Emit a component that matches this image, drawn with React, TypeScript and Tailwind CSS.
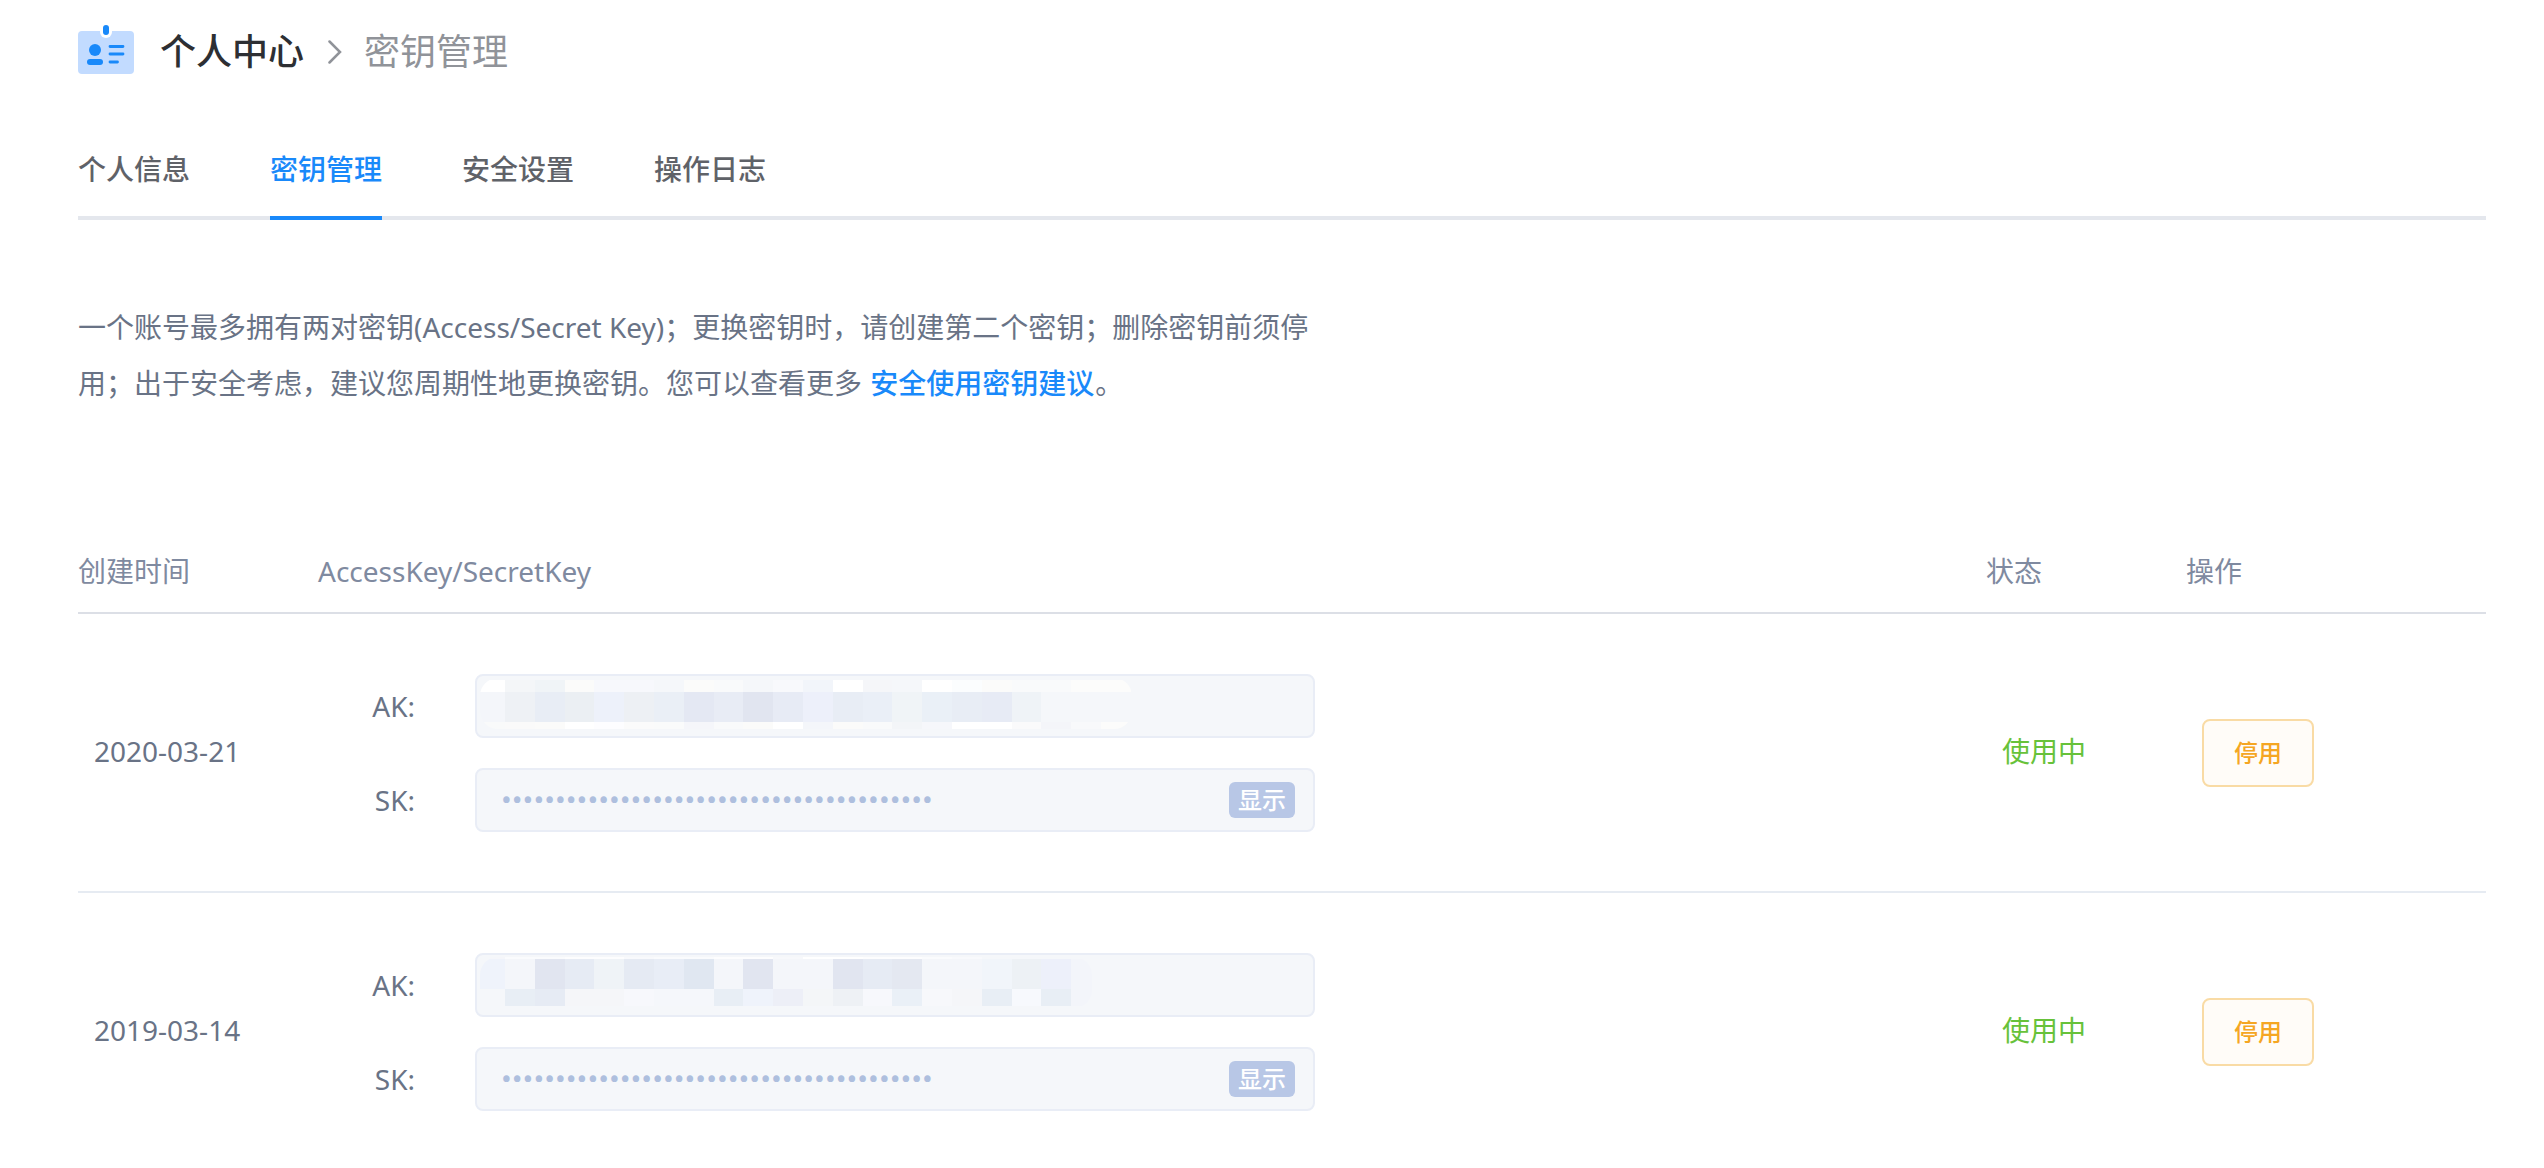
const TABS = ["个人信息", "密钥管理", "安全设置", "操作日志"];

type Mask = { bands: { y: number; height: number; colors: string[] }[]; clip: number };

type KeyRow = { date: string; mask: Mask };

const ROWS: KeyRow[] = [
  {
    date: "2020-03-21",
    mask: {
      clip: 652,
      bands: [
        {
          y: 4,
          height: 12,
          colors:
            "ffffff f4f6f8 f0f4f7 fbfbfa f7f8fc f7f8fc f5f7fa fbfbfa f9fafb f5f7fa f8f9fc f2f5fa ffffff f5f6f9 f5f7fa ffffff fbfdfe fbfbfa f9fafb f9fafb fcfcfb fcfcfb".split(" "),
        },
        {
          y: 16,
          height: 30,
          colors:
            "f4f6fa eef1f5 e8edf5 ebeff3 edf1fa edf0f4 eaeff6 e4e8f3 e8ecf5 e1e5f0 e7ebf5 edf0fa e8edf5 eaeff7 f0f4f7 eaf0f7 e8edf5 e7ebf5 eff3f7".split(" "),
        },
        {
          y: 46,
          height: 7,
          colors:
            "f9fafa fafafa fbfbfa ffffff fdfdff fbfbfb fafbfb f5f6fa f9fafb fbfbfa ffffff f4f6fa fbfbfa f9fafb f3f5f8 f6f7fb ffffff ffffff fafafb f4f5f9 f8f9fb fcfcfb".split(" "),
        },
      ],
    },
  },
  {
    date: "2019-03-14",
    mask: {
      clip: 612,
      bands: [
        { y: 2, height: 2, colors: "f5f6fa fafbfd fafbfd fdfdfe fdfdfe f8f9fc fafbfd fafbfd fdfdfe fdfdfe f7f8fb ffffff ffffff fdfdfe fdfdfe fafbfd f8f9fc".split(" ") },
        {
          y: 4,
          height: 30,
          colors:
            "eff3fb f4f6fa e1e5f0 e6ebf4 eff3f7 e5eaf3 e8edf6 e0e7f1 f4f6fa e1e5f0 f4f6fa f4f6fa e1e5f0 e6ebf4 e4e8f1 f4f6fa f4f6fa f1f5fa edf1f5 edf0fa f3f5fa".split(" "),
        },
        {
          y: 34,
          height: 17,
          colors:
            "f5f7fa e8eef5 e6ebf4 f5f6f9 f5f6f9 f7f8fc f5f7fb f5f7fb e8eef5 eff3fb edeff7 f4f6f8 eef1f5 f7f8fc eaf0f7 f7f8fb f5f6f9 e8eef5 f7f9fd e8eef5 f3f5fa".split(" "),
        },
      ],
    },
  },
];

function cellX(i: number) {
  return i === 0 ? 0 : Math.round(25 + (i - 1) * 29.8);
}

function KeyMask({ mask, id }: { mask: Mask; id: string }) {
  return (
    <svg width="660" height="60" viewBox="0 0 660 60" className="ml-[3px] block" shapeRendering="crispEdges" aria-hidden="true">
      <clipPath id={id}>
        <rect x="0" y="2" width={mask.clip} height="51" rx="18" />
      </clipPath>
      <g clipPath={`url(#${id})`}>
        {mask.bands.map((band) =>
          band.colors.map((color, i) => (
            <rect
              key={`${band.y}-${i}`}
              x={cellX(i)}
              y={band.y}
              width={cellX(i + 1) - cellX(i)}
              height={band.height}
              fill={`#${color}`}
            />
          )),
        )}
      </g>
    </svg>
  );
}

function BadgeIcon() {
  return (
    <svg width="56" height="54" viewBox="0 0 56 54" aria-hidden="true">
      <rect x="0" y="6" width="56" height="43" rx="4" fill="#c2dbff" />
      <path d="M22 5v2a6 6 0 0 0 12 0V5z" fill="#fff" />
      <rect x="25" y="0" width="6" height="10" rx="3" fill="#1989fa" />
      <circle cx="17" cy="25" r="6" fill="#1989fa" />
      <rect x="9" y="34" width="16" height="6" rx="3" fill="#1989fa" />
      <path d="M32 21.500h13M32 29h13M32 37h7.500" stroke="#1989fa" strokeWidth="2.800" strokeLinecap="round" />
    </svg>
  );
}

function KeyFields({ row }: { row: KeyRow }) {
  const akId = `ak-${row.date}`;
  const skId = `sk-${row.date}`;
  return (
    <div className="flex flex-col gap-[30px]">
      <div className="flex items-center gap-[60px]">
        <span id={akId} className="w-[81px] text-right">AK:</span>
        <div
          role="group"
          aria-labelledby={akId}
          className="h-16 w-full max-w-[840px] overflow-hidden rounded-lg border-2 border-[#e9edf6] bg-[#f5f7fa]"
        >
          <KeyMask mask={row.mask} id={`mask-${row.date}`} />
        </div>
      </div>
      <div className="flex items-center gap-[60px]">
        <label htmlFor={skId} className="w-[81px] text-right">SK:</label>
        <div className="flex h-16 w-full max-w-[840px] items-center rounded-lg border-2 border-[#e9edf6] bg-[#f5f7fa] pr-[18px] pl-6">
          <input
            id={skId}
            readOnly
            value={"•".repeat(40)}
            className="h-12 min-w-0 flex-1 bg-transparent font-[Roboto,sans-serif] text-[32px] text-[#aebfde] outline-none"
          />
          <button type="button" className="h-9 w-[66px] rounded-md bg-[#b8c7e6] text-2xl leading-9 font-medium text-white">
            显示
          </button>
        </div>
      </div>
    </div>
  );
}

export default function App() {
  return (
    <main className="min-h-screen bg-white pt-[26px] pr-[58px] pl-[78px] font-['Noto_Sans','Noto_Sans_CJK_SC',sans-serif] text-[28px] text-[#697386]">
      <header className="flex h-[52px] items-center">
        <BadgeIcon />
        <h1 className="ml-[26px] text-4xl font-medium text-[#2d2f33]">个人中心</h1>
        <svg width="14" height="24" viewBox="0 0 14 24" className="mr-[22px] ml-6 block" fill="none" stroke="#909399" strokeWidth="2.500" aria-hidden="true">
          <path d="M1.500 1.500L12 12L1.500 22.500" strokeLinecap="round" />
        </svg>
        <span className="text-4xl text-[#909399]">密钥管理</span>
      </header>

      <nav className="mt-[62px] flex h-20 gap-20 border-b-4 border-[#e4e7ed] leading-[58px] font-medium">
        {TABS.map((tab, i) => (
          <a
            key={tab}
            href="#"
            className={
              i === 1 ? "-mb-1 h-20 border-b-4 border-[#1989fa] text-[#1989fa]" : "text-[#5f6268]"
            }
          >
            {tab}
          </a>
        ))}
      </nav>

      <p className="mt-[79px] max-w-[1250px] leading-[56px]">
        一个账号最多拥有两对密钥(Access/Secret Key)；更换密钥时，请创建第二个密钥；删除密钥前须停用；出于安全考虑，建议您周期性地更换密钥。您可以查看更多{" "}
        <a href="#" className="mx-px font-medium text-[#1989fa]">安全使用密钥建议</a>。
      </p>

      <table className="mt-[118px] w-full table-fixed text-left">
        <colgroup>
          <col className="w-60" />
          <col />
          <col className="w-[200px]" />
          <col className="w-[300px]" />
        </colgroup>
        <thead>
          <tr className="h-[84px] border-b-2 border-[#dcdfe6] text-[#7f8aa0]">
            <th className="font-normal">创建时间</th>
            <th className="font-normal">AccessKey/SecretKey</th>
            <th className="font-normal">状态</th>
            <th className="font-normal">操作</th>
          </tr>
        </thead>
        <tbody>
          {ROWS.map((row) => (
            <tr key={row.date} className="h-[279px] border-b-2 border-[#e6ebf2] last:border-b-0">
              <td className="px-4 pb-1">{row.date}</td>
              <td className="px-4">
                <KeyFields row={row} />
              </td>
              <td className="px-4 pb-1 text-[#67c23a]">使用中</td>
              <td className="px-4">
                <button type="button" className="block h-[68px] w-28 rounded-lg border-2 border-[#f9dba5] bg-[#fffcf8] text-2xl font-medium text-[#f5a623]">
                  停用
                </button>
              </td>
            </tr>
          ))}
        </tbody>
      </table>
    </main>
  );
}
